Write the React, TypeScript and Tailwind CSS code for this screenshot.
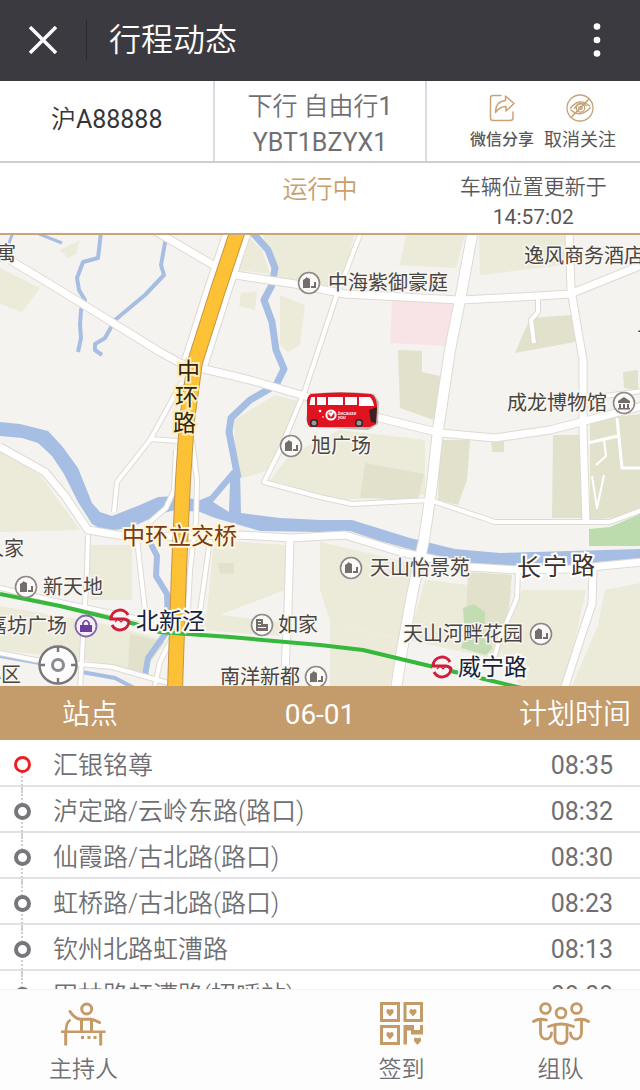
import React from 'react';

interface Stop {
  name: string;
  time: string;
  current?: boolean;
}

interface Poi {
  label: string;
  x: number;
  y: number;
  labelX: number;
}

const stops: Stop[] = [
  { name: '汇银铭尊', time: '08:35', current: true },
  { name: '泸定路/云岭东路(路口)', time: '08:32' },
  { name: '仙霞路/古北路(路口)', time: '08:30' },
  { name: '虹桥路/古北路(路口)', time: '08:23' },
  { name: '钦州北路虹漕路', time: '08:13' },
  { name: '田林路虹漕路(招呼站)', time: '08:08' },
];

// Map coordinates: x 0-640, y 235-686
const minorRoads = [
  'M361 232 335 300 320 345 305 390 280 450 264 482 320 497 352 504 430 500 495 522 610 522 642 510',
  'M182 382 150 440 117 482 114 512',
  'M150 439 177 441',
  'M88 535 87 570 80 690',
  'M137 540 145 610',
  'M210 540 200 612',
  'M518 570 517 598 500 638 494 658',
  'M0 653 36 660 80 664 112 667 168 683',
  'M176 450 174 490 166 508 150 522',
  'M192 440 197 480 196 520 190 570 188 610',
  'M176 630 160 662 154 690',
  'M0 588 60 602 140 619',
  'M538 299 538 312 531 320 534 343',
  'M598 397 642 391',
];

const mainRoads = [
  'M10 260 50 284 110 321 160 352 182 364 200 368 250 380 305 396 380 418 440 433 495 438 550 430 585 421 642 406',
  'M150 228 215 266 235 275 295 284 345 294 460 300 520 297 570 294 642 265',
  'M569 232 571 290 583 360 583 430 586 523',
  'M0 447 45 472 65 496 88 530 130 537 240 535 290 538 345 535 400 552 470 567 520 570 570 569 642 562',
  'M290 538 288 610 284 690',
  'M593 568 592 604 580 640 564 690',
];

const fields = [
  'M0 268 40 288 22 312 0 304Z',
  'M60 250 80 240 76 254 68 258Z',
  'M248 236 262 250 270 274 238 270Z',
  'M262 232H355L340 290 278 280Z',
  'M280 295 305 305 300 345 288 352 280 345Z',
  'M241 293 257 291 255 310 239 306Z',
  'M275 395 300 402 270 470 236 480 234 420Z',
  'M290 455 340 430 425 440 425 495 340 500 270 480Z',
  'M406 234H465L456 268 400 265Z',
  'M479 234H565V265L480 275Z',
  'M0 452 40 475 80 530 0 532Z',
  'M90 545H132V600H90Z',
  'M0 606 110 625 165 640 140 672 85 660 0 650Z',
  'M214 540 285 545V590L206 620Z',
  'M196 612 280 622V636L200 630Z',
  'M320 542 415 564 400 640 330 620 320 590Z',
  'M330 620 398 640 390 686H330Z',
  'M425 580 512 590 500 660 408 640Z',
  'M605 590 640 583V686H572L598 625Z',
  'M522 590H586L575 640 562 686H520L500 650Z',
];

const parks = [
  'M398 350 422 351V372L440 376 434 420 400 408Z',
  'M530 318 572 315 575 342 515 353Z',
  'M365 463 424 474 418 500 360 498Z',
  'M440 440 470 440 467 480 458 505 438 500Z',
  'M491 440 504 441V452H492Z',
  'M553 435H583V518H552Z',
  'M590 420 640 414V515L590 520Z',
  'M623 372 638 370V390L624 388Z',
  'M468 572 512 575 508 615 490 650 465 640Z',
  'M130 634 165 642 140 676 128 668Z',
  'M218 563 234 563V574L220 573Z',
];

const buildings: Poi[] = [
  { label: '中海紫御豪庭', x: 309, y: 283, labelX: 328 },
  { label: '旭广场', x: 291, y: 446, labelX: 311 },
  { label: '天山怡景苑', x: 351, y: 568, labelX: 370 },
  { label: '新天地', x: 26, y: 587, labelX: 43 },
  { label: '天山河畔花园', x: 541, y: 634, labelX: 403 },
  { label: '南洋新都', x: 316, y: 677, labelX: 220 },
];

const haloText = 'fill-[#4a4543] stroke-[#f8f6f0] stroke-[3px] [paint-order:stroke] text-[20px]';

const CloseIcon = () => (
  <svg viewBox="0 0 28 28" className="w-7 h-7" fill="none" stroke="#fff" strokeWidth="3.4">
    <path d="M1 1 27 27M27 1 1 27" />
  </svg>
);

const MoreIcon = () => (
  <svg viewBox="0 0 8 36" className="w-2 h-9" fill="#fff">
    <circle cx="4" cy="4.500" r="3.300" />
    <circle cx="4" cy="18" r="3.300" />
    <circle cx="4" cy="31.500" r="3.300" />
  </svg>
);

const ShareIcon = () => (
  <svg viewBox="0 0 26 28" className="w-[26px] h-7" fill="none" stroke="#cba278" strokeWidth="1.500" strokeLinejoin="round" strokeLinecap="round">
    <path d="M12 1.500H4Q1.500 1.500 1.500 4V24Q1.500 26.500 4 26.500H21Q24 26.500 24 24V18" />
    <path d="M16.500 2 25 9.500 17 17V12.500Q10.500 12.500 6.500 18.500 6.500 7.500 16.500 6.500Z" />
  </svg>
);

const UnfollowIcon = () => (
  <svg viewBox="0 0 28 28" className="w-7 h-7" fill="none" stroke="#c4a377" strokeWidth="1.300">
    <circle cx="14" cy="14" r="13" />
    <path d="M4 14.500Q14 2.500 24 12.500M4.500 15.500Q14 25 24.500 13.500" />
    <path d="M8 15Q14 5.500 21 12" />
    <circle cx="14.500" cy="14" r="4.200" />
    <circle cx="14.500" cy="14" r="1.700" />
    <path d="M5.500 23 23 5" strokeWidth="1.600" />
  </svg>
);

const HostIcon = () => (
  <svg viewBox="0 0 45 44" className="w-[45px] h-11" fill="none" stroke="#c49a66" strokeWidth="3">
    <circle cx="25.700" cy="7" r="5" />
    <path d="M9 9.500Q14 17 20 17.300H30Q34 18 38.500 20.500M20.500 18V29M30.500 18V29" strokeLinecap="round" />
    <path d="M8.700 18.500Q5.500 20 4.800 29" strokeLinecap="round" strokeWidth="2.600" />
    <path d="M0 29.700H44.500" strokeWidth="2.600" />
    <path d="M4.700 30V43.500M39.700 30V43.500" />
    <path d="M20 35.500H23M26.500 35.500H29.500M32.500 35.500H35.500" />
  </svg>
);

const QrIcon = () => (
  <svg viewBox="0 0 43 44" className="w-[43px] h-11" fill="#c49a66">
    <path fillRule="evenodd" d="M0 0H20V20H0ZM3 3V17H17V3ZM23.500 0H43V20H23.500ZM26.500 3V17H40V3ZM0 23H20V43H0ZM3 26V40H17V26Z" />
    <path d="M23.500 23H34V28H40V23H43V32.500H31V28.500H27V42.500H23.500Z" />
    <path d="M10 14.500 6.500 10.500Q6 7 8.500 7L10 8 11.500 7Q14 7 13.500 10.500Z" />
    <path d="M33 14.500 29.500 10.500Q29 7 31.500 7L33 8 34.500 7Q37 7 36.500 10.500Z" />
    <path d="M10 37.500 6.500 33.500Q6 30 8.500 30L10 31 11.500 30Q14 30 13.500 33.500Z" />
    <path d="M37.500 43 34 39Q33.500 35.500 36 35.500L37.500 36.500 39 35.500Q41.500 35.500 41 39Z" />
  </svg>
);

const TeamIcon = () => (
  <svg viewBox="0 0 58 44" className="w-[58px] h-11" fill="none" stroke="#c49a66" strokeWidth="2.800" strokeLinecap="round">
    <circle cx="13.500" cy="6.500" r="4.900" />
    <circle cx="29" cy="11" r="4.900" />
    <circle cx="44.500" cy="6.500" r="4.900" />
    <path d="M1.500 19.500Q7 16 14.500 18M56.500 19.500Q51 16 43.500 18" />
    <path d="M8.500 18V31Q9 37 14 37 19 37 19.500 31M49.500 18V31Q49 37 44 37 39 37 38.500 31" />
    <path d="M16.500 24.500Q29 19.500 41.500 24.500" />
    <path d="M23 24V36Q23 41.500 29 41.500 35 41.500 35 36V24" />
  </svg>
);

const PoiPin: React.FC<{ x: number; y: number }> = ({ x, y }) => (
  <g transform={`translate(${x} ${y})`}>
    <circle r="10.500" fill="#fbfaf8" stroke="#8d8785" strokeWidth="1.600" />
    <path d="M-6 5V-3L-3 -5V5ZM-3 5V-6L1 -4V5ZM2 5V3H5V-1H7V5Z" fill="#756d6b" />
  </g>
);

const MetroLogo: React.FC<{ x: number; y: number }> = ({ x, y }) => (
  <g transform={`translate(${x} ${y})`} fill="none" stroke="#cf1f3c" strokeWidth="3">
    <circle r="10" fill="#f7f5f0" stroke="none" />
    <path d="M8 -5A9 9 0 0 0 -9 -1H4Q9 0 9 2M-8 5A9 9 0 0 0 9 1" />
    <path d="M-5 2-2 -1 1 2 4 -1 8 2" strokeWidth="1.200" />
  </g>
);

const Bus = () => (
  <g>
    <path d="M310 394Q340 390 374 394L379 402 378 424 368 430 311 427 306 420Z" fill="#6d6464" opacity="0.4" />
    <path d="M311 394Q340 391 371 394 376 396 377 405L376 424 370 427H310Q307 425 307 420V400Q308 395 311 394Z" fill="#df1420" />
    <path d="M311 397H315V405H309.500ZM317 397H326V405H317ZM328 397H343V405H328ZM345 397H357V405H345ZM359 397H370Q373 400 374 406H359Z" fill="#fff" />
    <path d="M369 410 377 407 376 423 371 422Z" fill="#3c2023" />
    <circle cx="331" cy="415" r="4.600" fill="none" stroke="#fff" strokeWidth="2" />
    <path d="M331 417 328 413.500 330 412 331 413 333 411 334 413Z" fill="#fff" />
    <circle cx="320" cy="411" r="1.300" fill="#fff" />
    <circle cx="323" cy="417" r="0.800" fill="#fff" />
    <text x="338" y="415" className="fill-white text-[5px] italic font-medium">because</text>
    <text x="338" y="419" className="fill-white text-[5px] italic font-medium">you</text>
    <g fill="#999" stroke="#2e2a2c" strokeWidth="1.600">
      <circle cx="314" cy="423" r="3.300" />
      <circle cx="359" cy="423" r="3.300" />
    </g>
  </g>
);

const TripMap = () => (
  <svg
    viewBox="0 235 640 451"
    preserveAspectRatio="xMidYMid slice"
    className="block w-full aspect-[640/451] shrink-0 font-normal"
    role="img"
    aria-label="车辆位置"
  >
    <rect x="0" y="235" width="640" height="451" fill="#f5f3ef" />
    <g fill="#ecead9">
      {fields.map((d) => <path key={d} d={d} />)}
    </g>
    <g fill="#e2e1cc">
      {parks.map((d) => <path key={d} d={d} />)}
    </g>
    <path d="M392 300 454 302 446 346 390 343Z" fill="#f8e4e7" />
    <path d="M589 529 610 527 640 514V546H589Z" fill="#bddcae" />
    <path d="M463 608 474 604 485 612 484 638 493 648 486 655 461 648 465 635Z" fill="#c2dcb4" />

    {/* Rivers */}
    <path
      fillRule="evenodd"
      fill="#a6bee3"
      d="M0 422 20 424 48 431 62 446 78 468 92 503 100 512 112 516 140 505 158 497 175 496 200 500 210 496 232 470 240 470 241 513 280 518 320 520 352 520 410 538 455 549 500 553 640 549V566L500 567 450 560 420 552 380 541 350 531 320 532 260 531 215 518 200 512 175 510 160 514 130 528 105 531 92 524 78 502 64 474 52 456 38 443 22 438 0 436ZM213 502 230 482 229 512Z"
    />
    <g fill="none" stroke="#a6bee3" strokeLinejoin="round">
      <path strokeWidth="7" d="M252 232 268 250 275 268 272 285 264 300 272 322 276 350 284 369 276 385 250 400 231 418 229 432 238 478" />
      <path strokeWidth="4" d="M101 232 98 258 83 262 77 278 79 290 85 300 81 310 80 325 81 338 78 352" />
      <path strokeWidth="4" d="M167 232 161 265 164 275 145 295 115 320 105 338 95 344 95 350 102 355" />
      <path strokeWidth="3" d="M34 232 62 243M13 232 8 246" />
      <path strokeWidth="6" d="M150 542 157 556 156 576 167 594 168 630 148 658 145 676" />
      <path strokeWidth="4" d="M0 656 40 663 M82 672 115 678 138 690" />
    </g>

    {/* Roads, drawn as an outline pass and a fill pass */}
    <g fill="none" strokeLinejoin="round">
      <g stroke="#dedad3">
        {minorRoads.map((d) => <path key={d} d={d} strokeWidth="6" />)}
        {mainRoads.map((d) => <path key={d} d={d} strokeWidth="9" />)}
        <path d="M473 230 460 300 450 350 438 430 432 485 424 540 412 595 402 650 396 690" strokeWidth="12" />
        <path d="M238 230 218 290 195 362" strokeWidth="28" />
      </g>
      <g stroke="#fff">
        {minorRoads.map((d) => <path key={d} d={d} strokeWidth="4" />)}
        {mainRoads.map((d) => <path key={d} d={d} strokeWidth="7" />)}
        <path d="M473 230 460 300 450 350 438 430 432 485 424 540 412 595 402 650 396 690" strokeWidth="10" />
        <path d="M238 230 218 290 195 362" strokeWidth="26" />
        <path d="M617 418 622 468H642M588 443 618 436" strokeWidth="3" />
        <path d="M604 440 606 456 596 465M592 476 597 508 604 475" strokeWidth="2" />
      </g>
      <path d="M238 230 218 290 195 362 187 420 183 480 179 570 175 690" stroke="#c5954a" strokeWidth="16" />
      <path d="M238 230 218 290 195 362 187 420 183 480 179 570 175 690" stroke="#fdc136" strokeWidth="14" />
      <path d="M0 594 60 606 135 624 160 632 230 637 320 645 363 650 430 666 480 678 530 690" stroke="#35b83b" strokeWidth="4" />
    </g>

    {/* Places */}
    {buildings.map((poi) => (
      <g key={poi.label}>
        <PoiPin x={poi.x} y={poi.y} />
        <text x={poi.labelX} y={poi.y + 7} className={haloText}>{poi.label}</text>
      </g>
    ))}
    <g className={haloText}>
      <text x="-4" y="261">寓</text>
      <text x="524" y="263">逸风商务酒店</text>
      <text x="637" y="347">百</text>
      <text x="507" y="410">成龙博物馆</text>
      <text x="-16" y="556">人家</text>
      <text x="-13" y="633">嘉坊广场</text>
      <text x="278" y="632">如家</text>
      <text x="-19" y="682">小区</text>
    </g>
    <g transform="translate(624 403)">
      <circle r="10.500" fill="#fbfaf8" stroke="#8d8785" strokeWidth="1.600" />
      <path d="M-6 -2 0 -6 6 -2V0H-6ZM-5 1H-3V5H-5ZM-1 1H1V5H-1ZM3 1H5V5H3ZM-6 5H6V6.500H-6Z" fill="#756d6b" />
    </g>
    <g transform="translate(262 625)">
      <circle r="10.500" fill="#fbfaf8" stroke="#8d8785" strokeWidth="1.600" />
      <path d="M-6 -6H1V-1H6V6H-6ZM-4 -4V-3H-1V-4ZM-4 -1V0H-1V-1ZM-4 2V3H4V2Z" fill="#756d6b" fillRule="evenodd" />
    </g>
    <g transform="translate(86 626)">
      <circle r="10.500" fill="#f5effa" stroke="#8468a8" strokeWidth="1.800" />
      <path d="M-6 -1H6V6H-6Z" fill="#6b3fa0" />
      <path d="M-3 0V-3Q0 -8 3 -3V0" fill="none" stroke="#6b3fa0" strokeWidth="1.600" />
    </g>

    {/* Road names */}
    <g className="fill-[#33250f] stroke-[#ffedb8] stroke-[4px] [paint-order:stroke] text-[23px]">
      <text x="177 175 173" y="379 405 431">中环路</text>
    </g>
    <text x="122" y="544" className="fill-[#7a3a10] stroke-[#fff6dc] stroke-[4px] [paint-order:stroke] text-[23px]">中环立交桥</text>
    <text x="517 543 571" y="576 575 574" className="fill-[#3b3029] stroke-white stroke-[4px] [paint-order:stroke] text-[24px]">长宁路</text>

    {/* Metro stations */}
    <MetroLogo x={120} y={620} />
    <MetroLogo x={442} y={667} />
    <g className="fill-[#17223f] stroke-[#fbfaf5] stroke-[4px] [paint-order:stroke] text-[23px]">
      <text x="136" y="629">北新泾</text>
      <text x="458" y="675">威宁路</text>
    </g>

    <Bus />

    {/* Locate control */}
    <g transform="translate(58 665)" fill="none" stroke="#77787b">
      <circle r="18.500" fill="#fcfcfc" strokeWidth="2.400" />
      <circle r="5.500" strokeWidth="3" stroke="#8b8c8f" />
      <path d="M0 -18V-13M0 13V18M-18 0H-13M13 0H18" strokeWidth="2.400" />
    </g>
  </svg>
);

const TopBar = () => (
  <header className="flex items-center h-[81px] shrink-0 bg-[#3b3a40] text-white pl-[29px] pr-[39px] pb-0.5">
    <button type="button" aria-label="关闭"><CloseIcon /></button>
    <span className="w-px h-10 bg-[#2b2a2f] ml-[29px] mr-[22px]" />
    <h1 className="flex-1 text-[32px] leading-10 font-[350]">行程动态</h1>
    <button type="button" aria-label="更多"><MoreIcon /></button>
  </header>
);

const VehicleInfo = () => (
  <section className="shrink-0 bg-white text-[#707074]">
    <div className="grid grid-cols-3 h-[82px] border-b-2 border-[#cfced3]">
      <div className="flex items-center justify-center pb-0.5 text-[25px] text-[#353538]">
        <span>沪<span className="font-normal">A88888</span></span>
      </div>
      <div className="flex flex-col items-center justify-center pt-2 border-x-2 border-[#dcdbe0] text-[25px] leading-9">
        <span>下行 自由行<span className="font-normal">1</span></span>
        <span className="font-normal">YBT1BZYX1</span>
      </div>
      <div className="flex items-center justify-end gap-2.5 pr-6 pt-1 text-[#58575a]">
        <button type="button" className="flex flex-col items-center gap-1.5">
          <ShareIcon />
          <span className="text-[16px] leading-6 font-medium">微信分享</span>
        </button>
        <button type="button" className="flex flex-col items-center gap-1.5">
          <UnfollowIcon />
          <span className="text-[18px] leading-6 font-normal">取消关注</span>
        </button>
      </div>
    </div>
    <div className="grid grid-cols-3 h-[72px] pt-[9px] border-b-2 border-[#c9a57c] text-center">
      <div className="col-start-2 text-[25px] leading-9 text-[#c9a06c]">运行中</div>
      <div className="text-[21px] leading-[30px] text-[#58575a]">
        车辆位置更新于<br /><span className="font-normal">14:57:02</span>
      </div>
    </div>
  </section>
);

const StopRow: React.FC<{ stop: Stop }> = ({ stop }) => (
  <tr className="h-[46px] border-b-2 border-[#e2e1e6]">
    <td colSpan={2} className="p-0 pl-[13px]">
      <div className="flex items-center h-11 pt-1 gap-[22px]">
        <span className="relative flex items-center justify-center w-[18px] h-full">
          <span className={`absolute left-2 w-0 border-l-2 border-dotted border-[#cfced2] ${stop.current ? 'top-1/2 h-7' : '-top-1 h-[52px]'}`} />
          <span className={`relative w-[17px] h-[17px] rounded-full bg-white ${stop.current ? 'border-[3px] border-[#ee1f24]' : 'border-4 border-[#77777b]'}`} />
        </span>
        <span className="truncate pt-0.5">{stop.name}</span>
      </div>
    </td>
    <td className="p-0 pt-1.5 pr-[27px] text-right font-normal">{stop.time}</td>
  </tr>
);

const StopTable = () => (
  <div className="flex-1 min-h-0 overflow-y-auto [scrollbar-width:none] bg-white">
    <table className="w-full table-fixed border-collapse">
      <thead className="bg-[#c49b6b] text-white">
        <tr className="h-[54px] text-[28px] leading-10">
          <th className="p-0 pt-1 pl-[62px] text-left font-[350]">站点</th>
          <th className="p-0 pt-1 font-normal">06-01</th>
          <th className="p-0 pt-1 pr-[9px] text-right font-[350]">计划时间</th>
        </tr>
      </thead>
      <tbody className="text-[25px] leading-9 text-[#6f6f73]">
        {stops.map((stop) => <StopRow key={stop.name} stop={stop} />)}
      </tbody>
    </table>
  </div>
);

const BottomNav = () => (
  <nav className="grid grid-cols-4 h-[101px] shrink-0 pl-1 pt-3 bg-[#fdfdfd] border-t border-[#f1f1f2] text-[23px] leading-9 text-[#707074]">
    <button type="button" className="flex flex-col items-center gap-1.5">
      <HostIcon />
      <span>主持人</span>
    </button>
    <button type="button" className="col-start-3 flex flex-col items-center gap-1.5">
      <QrIcon />
      <span>签到</span>
    </button>
    <button type="button" className="flex flex-col items-center gap-1.5">
      <TeamIcon />
      <span>组队</span>
    </button>
  </nav>
);

export default function App() {
  return (
    <div className="flex flex-col h-screen bg-white font-[350] font-[Roboto,'Noto_Sans_CJK_SC',sans-serif]">
      <TopBar />
      <VehicleInfo />
      <TripMap />
      <StopTable />
      <BottomNav />
    </div>
  );
}
